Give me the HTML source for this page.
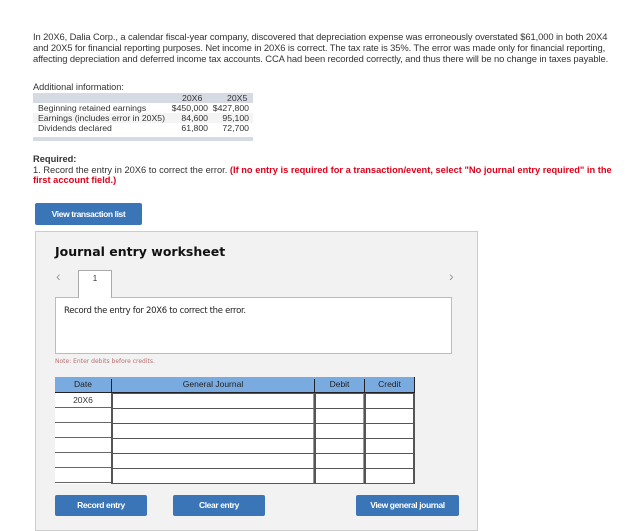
<!DOCTYPE html>
<html><head><style>
*{margin:0;padding:0;box-sizing:border-box}
body{width:625px;height:529px;background:#fff;font-family:"Liberation Sans",Arial,sans-serif;color:#333;position:relative;overflow:hidden}
.a{position:absolute;white-space:nowrap}
.p{font-size:9.4px;line-height:11px;left:33px;top:31px;letter-spacing:-0.1px}
.btn{position:absolute;background:#3a75b8;color:#fff;font-weight:bold;font-size:8.5px;text-align:center;border-radius:2px;letter-spacing:-0.4px}
.cell{position:absolute;border:1px solid #444}
</style></head><body>
<div class="a p">In 20X6, Dalia Corp., a calendar fiscal-year company, discovered that depreciation expense was erroneously overstated $61,000 in both 20X4<br>and 20X5 for financial reporting purposes. Net income in 20X6 is correct. The tax rate is 35%. The error was made only for financial reporting,<br>affecting depreciation and deferred income tax accounts. CCA had been recorded correctly, and thus there will be no change in taxes payable.</div>
<div class="a" style="left:33px;top:82px;font-size:9.2px">Additional information:</div>
<div class="a" style="left:33px;top:93px;width:220px;height:10px;background:#d6dae3"></div>
<div class="a" style="left:33px;top:113px;width:220px;height:10px;background:#f4f4f4"></div>
<div class="a" style="left:33px;top:137px;width:220px;height:4px;background:#d6dae3"></div>
<div class="a" style="left:0;top:93px;font-size:8.7px;line-height:10px">
<div style="position:absolute;left:182px;top:0">20X6</div><div style="position:absolute;left:227px;top:0">20X5</div>
<div style="position:absolute;left:38px;top:10px">Beginning retained earnings<br>Earnings (includes error in 20X5)<br>Dividends declared</div>
<div style="position:absolute;left:158px;top:10px;text-align:right;width:50px">$450,000<br>84,600<br>61,800</div>
<div style="position:absolute;left:199px;top:10px;text-align:right;width:50px">$427,800<br>95,100<br>72,700</div>
</div>
<div class="a" style="left:33px;top:154px;font-size:9.3px;line-height:10.5px"><b style="font-weight:bold">Required:</b><br>1. Record the entry in 20X6 to correct the error. <span style="color:#e0001b;font-weight:bold">(If no entry is required for a transaction/event, select "No journal entry required" in the</span><br><span style="color:#e0001b;font-weight:bold">first account field.)</span></div>
<div class="btn" style="left:35px;top:203px;width:107px;height:22px;line-height:22px">View transaction list</div>
<div class="a" style="left:35px;top:231px;width:443px;height:300px;background:#f2f2f2;border:1px solid #ccc"></div>
<div class="a" style="left:55px;top:244px;font-size:12.5px;font-weight:bold;font-family:'DejaVu Sans',sans-serif;color:#111">Journal entry worksheet</div>
<div class="a" style="left:56px;top:268px;font-size:14px;color:#999">&lsaquo;</div>
<div class="a" style="left:449px;top:268px;font-size:14px;color:#999">&rsaquo;</div>
<div class="a" style="left:78px;top:270px;width:34px;height:28px;background:#fff;border:1px solid #aaa;border-bottom:none;font-size:8px;text-align:center;line-height:16px;z-index:2">1</div>
<div class="a" style="left:55px;top:297px;width:397px;height:57px;background:#fff;border:1px solid #bbb"></div>
<div class="a" style="left:64px;top:306px;font-size:8.5px;font-family:'DejaVu Sans',sans-serif;color:#222;letter-spacing:-0.3px">Record the entry for 20X6 to correct the error.</div>
<div class="a" style="left:55px;top:358px;font-size:6px;font-family:'DejaVu Sans',sans-serif;color:#b87070">Note: Enter debits before credits.</div>
<div class="a" style="left:55px;top:377px;width:360px;height:107px;background:#fff"></div>
<div class="a" style="left:55px;top:377px;width:360px;height:16px;background:#7aabe0;border-bottom:1px solid #222;border-right:1px solid #222"></div>
<div class="a" style="left:55px;top:379px;width:56px;text-align:center;font-size:8.5px;color:#222">Date</div>
<div class="a" style="left:111px;top:379px;width:203px;text-align:center;font-size:8.5px;color:#222;border-left:1px solid #222;height:14px">General Journal</div>
<div class="a" style="left:314px;top:379px;width:50px;text-align:center;font-size:8.5px;color:#222;border-left:1px solid #222;height:14px">Debit</div>
<div class="a" style="left:364px;top:379px;width:50px;text-align:center;font-size:8.5px;color:#222;border-left:1px solid #222;height:14px">Credit</div>
<div class="a" style="left:55px;top:395px;width:56px;text-align:center;font-size:8.5px;color:#333">20X6</div>
<div id="rows"></div>
<script>
var h='';for(var i=0;i<6;i++){var y=393+i*15;
h+='<div class="a" style="left:55px;top:'+(y+14)+'px;width:57px;height:1px;background:#666"></div>';
h+='<div class="cell" style="left:111px;top:'+y+'px;width:204px;height:16px;border-color:#555 #7a9cc8 #555 #555;border-width:1px 2px 1px 2px"></div>';
h+='<div class="cell" style="left:314px;top:'+y+'px;width:51px;height:16px;border-color:#555 #7a9cc8 #555 #555;border-width:1px 2px 1px 2px"></div>';
h+='<div class="cell" style="left:364px;top:'+y+'px;width:51px;height:16px;border-color:#555 #555 #555 #555;border-width:1px 2px 1px 2px"></div>';}
document.getElementById('rows').outerHTML=h;
</script>
<div class="btn" style="left:55px;top:495px;width:92px;height:21px;line-height:21px">Record entry</div>
<div class="btn" style="left:173px;top:495px;width:92px;height:21px;line-height:21px">Clear entry</div>
<div class="btn" style="left:356px;top:495px;width:103px;height:21px;line-height:21px">View general journal</div>
</body></html>
